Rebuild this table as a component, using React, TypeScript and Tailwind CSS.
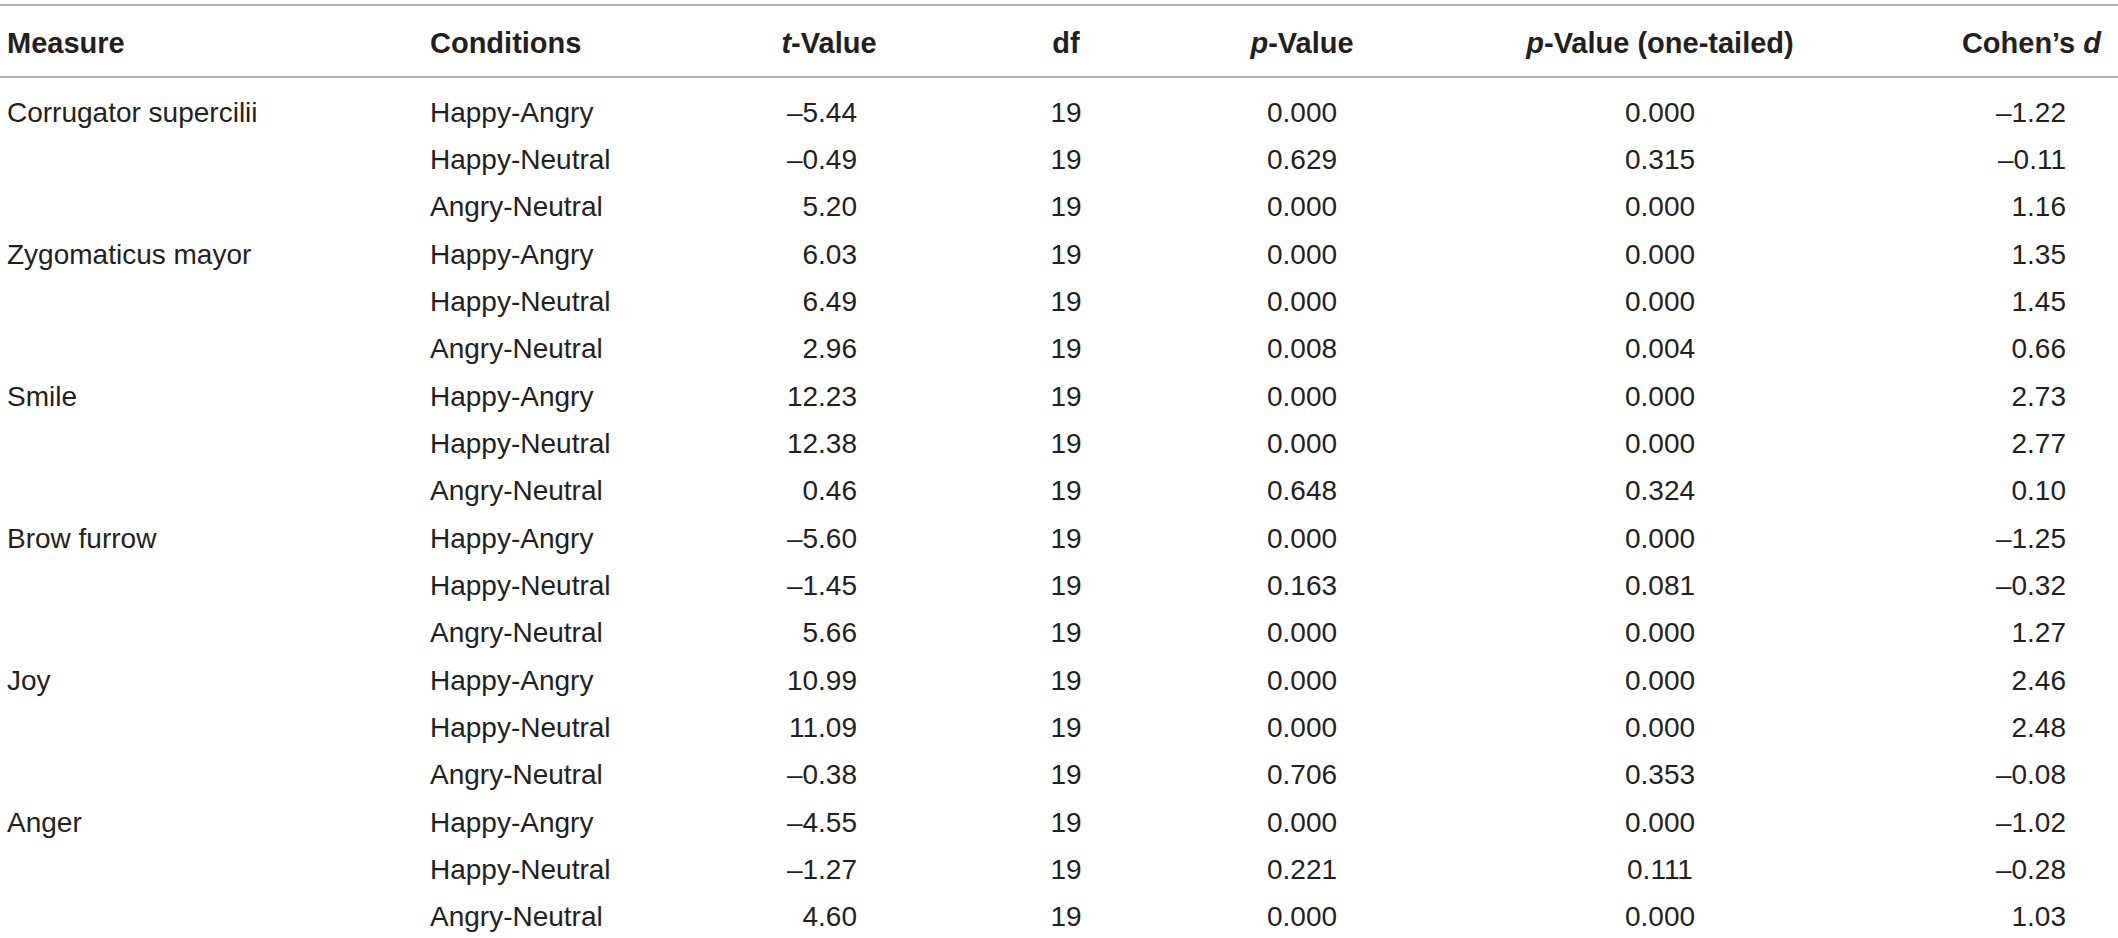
import React from 'react';

type Row = {
    measure?: string;
    cond: string;
    t: string;
    p: string;
    p1: string;
    d: string;
};

const ROWS: Row[] = [
    { measure: 'Corrugator supercilii', cond: 'Happy-Angry', t: '–5.44', p: '0.000', p1: '0.000', d: '–1.22' },
    { cond: 'Happy-Neutral', t: '–0.49', p: '0.629', p1: '0.315', d: '–0.11' },
    { cond: 'Angry-Neutral', t: '5.20', p: '0.000', p1: '0.000', d: '1.16' },
    { measure: 'Zygomaticus mayor', cond: 'Happy-Angry', t: '6.03', p: '0.000', p1: '0.000', d: '1.35' },
    { cond: 'Happy-Neutral', t: '6.49', p: '0.000', p1: '0.000', d: '1.45' },
    { cond: 'Angry-Neutral', t: '2.96', p: '0.008', p1: '0.004', d: '0.66' },
    { measure: 'Smile', cond: 'Happy-Angry', t: '12.23', p: '0.000', p1: '0.000', d: '2.73' },
    { cond: 'Happy-Neutral', t: '12.38', p: '0.000', p1: '0.000', d: '2.77' },
    { cond: 'Angry-Neutral', t: '0.46', p: '0.648', p1: '0.324', d: '0.10' },
    { measure: 'Brow furrow', cond: 'Happy-Angry', t: '–5.60', p: '0.000', p1: '0.000', d: '–1.25' },
    { cond: 'Happy-Neutral', t: '–1.45', p: '0.163', p1: '0.081', d: '–0.32' },
    { cond: 'Angry-Neutral', t: '5.66', p: '0.000', p1: '0.000', d: '1.27' },
    { measure: 'Joy', cond: 'Happy-Angry', t: '10.99', p: '0.000', p1: '0.000', d: '2.46' },
    { cond: 'Happy-Neutral', t: '11.09', p: '0.000', p1: '0.000', d: '2.48' },
    { cond: 'Angry-Neutral', t: '–0.38', p: '0.706', p1: '0.353', d: '–0.08' },
    { measure: 'Anger', cond: 'Happy-Angry', t: '–4.55', p: '0.000', p1: '0.000', d: '–1.02' },
    { cond: 'Happy-Neutral', t: '–1.27', p: '0.221', p1: '0.111', d: '–0.28' },
    { cond: 'Angry-Neutral', t: '4.60', p: '0.000', p1: '0.000', d: '1.03' },
];

const cols = 'grid grid-cols-[423px_317px_178px_296px_176px_540px_188px] items-center';

const App: React.FC = () => {
    return (
        <div className="w-[2118px] h-[938px] overflow-hidden bg-white pt-[4px] font-['Liberation_Sans',Arial,sans-serif] text-[#231f20]">
            <div className="h-[2px] bg-[#b3b3b3]" />
            {/* Header */}
            <div className={`${cols} h-[70px] pt-[4px] text-[29px] font-bold leading-none`}>
                <div className="pl-[7px]">Measure</div>
                <div className="pl-[7px]">Conditions</div>
                <div className="text-center"><i>t</i>-Value</div>
                <div className="text-center">df</div>
                <div className="text-center"><i>p</i>-Value</div>
                <div className="text-center"><i>p</i>-Value (one-tailed)</div>
                <div className="text-right pr-[17px]">Cohen’s <i>d</i></div>
            </div>
            <div className="h-[2px] bg-[#b3b3b3]" />
            {/* Body */}
            <div className="pt-[11px] text-[28px] leading-none">
                {ROWS.map((r, i) => (
                    <div key={i} className={`${cols} h-[47.33px]`}>
                        <div className="pl-[7px]">{r.measure ?? ''}</div>
                        <div className="pl-[7px]">{r.cond}</div>
                        <div className="text-right pr-[61px]">{r.t}</div>
                        <div className="text-center">19</div>
                        <div className="text-center">{r.p}</div>
                        <div className="text-center">{r.p1}</div>
                        <div className="text-right pr-[52px]">{r.d}</div>
                    </div>
                ))}
            </div>
        </div>
    );
};

export default App;
